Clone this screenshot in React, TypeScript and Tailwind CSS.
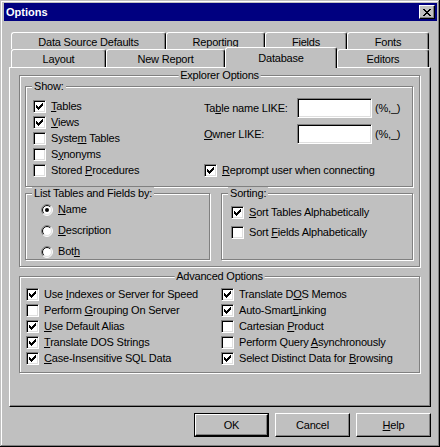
import React from 'react'

// 7x7 win95 check mark and 8x7 close glyph, drawn pixel by pixel
const CHECK = ['......X', '.....XX', 'X...XXX', 'XX.XXX.', 'XXXXX..', '.XXX...', '..X....']
const CLOSE = ['XX....XX', '.XX..XX.', '..XXXX..', '...XX...', '..XXXX..', '.XX..XX.', 'XX....XX']

const Pixels = ({ rows }: { rows: string[] }) => (
  <svg
    width={rows[0].length}
    height={rows.length}
    viewBox={`0 0 ${rows[0].length} ${rows.length}`}
    shapeRendering="crispEdges">
    {rows.flatMap((row, y) =>
      row
        .split('')
        .map((c, x) =>
          c === 'X' ? <rect key={`${x}-${y}`} x={x} y={y} width="1" height="1" fill="#000" /> : null,
        ),
    )}
  </svg>
)

const sunken =
  'bg-white border border-t-[#808080] border-l-[#808080] border-b-white border-r-white shadow-[inset_1px_1px_0_#000,inset_-1px_-1px_0_#dfdfdf]'

const CheckBox = ({ checked }: { checked?: boolean }) => (
  <div className={`w-[13px] h-[13px] shrink-0 flex items-center justify-center ${sunken}`}>
    {checked && <Pixels rows={CHECK} />}
  </div>
)

const Check = ({ checked, children }: { checked?: boolean; children: React.ReactNode }) => (
  <div className="flex items-center h-[16px]">
    <CheckBox checked={checked} />
    <span className="ml-[5px] whitespace-nowrap leading-[13px]">{children}</span>
  </div>
)

const Radio = ({ checked, children }: { checked?: boolean; children: React.ReactNode }) => {
  const arc = (r: number) => {
    const d = r * 0.7071
    return { bl: `${6 - d} ${6 + d}`, tr: `${6 + d} ${6 - d}` }
  }
  const o = arc(5.5)
  const i = arc(4.5)
  return (
    <div className="flex items-center h-[21px]">
      <svg width="12" height="12" viewBox="0 0 12 12" className="shrink-0">
        <circle cx="6" cy="6" r="5" fill="#fff" />
        <path d={`M${o.bl} A5.5 5.5 0 0 1 ${o.tr}`} stroke="#808080" fill="none" />
        <path d={`M${o.tr} A5.5 5.5 0 0 1 ${o.bl}`} stroke="#fff" fill="none" />
        <path d={`M${i.bl} A4.5 4.5 0 0 1 ${i.tr}`} stroke="#000" fill="none" />
        <path d={`M${i.tr} A4.5 4.5 0 0 1 ${i.bl}`} stroke="#dfdfdf" fill="none" />
        {checked && <circle cx="6" cy="6" r="2" fill="#000" />}
      </svg>
      <span className="ml-[5px] whitespace-nowrap leading-[13px]">{children}</span>
    </div>
  )
}

const GroupBox = ({
  label,
  center,
  className,
  children,
}: {
  label: string
  center?: boolean
  className: string
  children?: React.ReactNode
}) => (
  <div className={`relative shrink-0 border border-[#808080] shadow-[1px_1px_0_#fff,inset_1px_1px_0_#fff] ${className}`}>
    <span
      className={`absolute top-[-7px] leading-[13px] px-[2px] bg-[#c0c0c0] whitespace-nowrap ${
        center ? 'left-1/2 -translate-x-1/2' : 'left-[6px]'
      }`}>
      {label}
    </span>
    {children}
  </div>
)

const Tab = ({ label, className }: { label: string; className: string }) => (
  <div
    className={`shrink-0 flex items-center justify-center pt-[2px] bg-[#c0c0c0] border-l border-t border-white border-r border-r-black rounded-t-[3px] shadow-[inset_-1px_0_0_#808080] whitespace-nowrap ${className}`}>
    {label}
  </div>
)

const raised =
  'bg-[#c0c0c0] border border-t-white border-l-white border-b-black border-r-black shadow-[inset_-1px_-1px_0_#808080]'

const Button = ({ children, isDefault }: { children: React.ReactNode; isDefault?: boolean }) =>
  isDefault ? (
    <div className="w-[75px] h-[24px] border border-black flex">
      <div className={`flex-1 flex items-center justify-center ${raised}`}>{children}</div>
    </div>
  ) : (
    <div className={`w-[75px] h-[24px] flex items-center justify-center ${raised}`}>{children}</div>
  )

export default function App() {
  return (
    <div className="w-[440px] h-[447px] bg-[#c0c0c0] pt-[3px] text-black text-[11px] tracking-[-0.2px] font-['Liberation_Sans',Arial,sans-serif] shadow-[inset_-1px_-1px_0_#000,inset_1px_1px_0_#c0c0c0,inset_-2px_-2px_0_#808080,inset_2px_2px_0_#fff] overflow-hidden">
      {/* title bar */}
      <div className="ml-[4px] w-[433px] h-[18px] bg-[#000080] flex items-center justify-between pl-[2px] pr-[2px]">
        <span className="text-white font-bold tracking-normal leading-[13px]">Options</span>
        <div className={`w-[16px] h-[14px] flex items-center justify-center ${raised}`}>
          <Pixels rows={CLOSE} />
        </div>
      </div>

      {/* tabs */}
      <div className="mt-[11px] ml-[11px] flex h-[17px]">
        <Tab label="Data Source Defaults" className="w-[155px] h-[17px]" />
        <Tab label="Reporting" className="w-[99px] h-[17px]" />
        <Tab label="Fields" className="w-[82px] h-[17px]" />
        <Tab label="Fonts" className="w-[82px] h-[17px]" />
      </div>
      <div className="ml-[11px] flex items-start h-[18px] relative z-10">
        <Tab label="Layout" className="w-[95px] h-[18px]" />
        <Tab label="New Report" className="w-[119px] h-[18px]" />
        <Tab label="Database" className="w-[112px] h-[21px] -mt-[2px] pb-[2px]" />
        <Tab label="Editors" className="w-[92px] h-[18px]" />
      </div>

      {/* tab panel */}
      <div className="ml-[9px] w-[422px] h-[340px] pt-[7px] pl-[9px] border border-t-white border-l-white border-b-black border-r-black shadow-[inset_-1px_-1px_0_#808080]">
        <GroupBox label="Explorer Options" center className="w-[401px] h-[192px] pt-[10px] pl-[5px]">
          <GroupBox label="Show:" className="w-[388px] h-[101px] pt-[11px] pl-[7px] flex">
            <div className="w-[171px] flex flex-col">
              <Check checked>
                <u>T</u>ables
              </Check>
              <Check checked>
                <u>V</u>iews
              </Check>
              <Check>
                Syste<u>m</u> Tables
              </Check>
              <Check>
                S<u>y</u>nonyms
              </Check>
              <Check>
                Stored <u>P</u>rocedures
              </Check>
            </div>
            <div className="flex flex-col">
              <div className="flex items-center h-[20px]">
                <span className="w-[93px] leading-[13px]">
                  Ta<u>b</u>le name LIKE:
                </span>
                <div className={`w-[75px] h-[20px] ${sunken}`} />
                <span className="ml-[3px] leading-[13px]">(%,_)</span>
              </div>
              <div className="flex items-center h-[20px] mt-[6px]">
                <span className="w-[93px] leading-[13px]">
                  <u>O</u>wner LIKE:
                </span>
                <div className={`w-[75px] h-[20px] ${sunken}`} />
                <span className="ml-[3px] leading-[13px]">(%,_)</span>
              </div>
              <div className="mt-[18px]">
                <Check checked>
                  <u>R</u>eprompt user when connecting
                </Check>
              </div>
            </div>
          </GroupBox>

          <div className="mt-[6px] flex">
            <GroupBox label="List Tables and Fields by:" className="w-[185px] h-[67px] pt-[5px] pl-[15px]">
              <Radio checked>
                <u>N</u>ame
              </Radio>
              <Radio>
                <u>D</u>escription
              </Radio>
              <Radio>
                Bot<u>h</u>
              </Radio>
            </GroupBox>
            <GroupBox label="Sorting:" className="ml-[11px] w-[192px] h-[67px] pt-[10px] pl-[9px] flex flex-col gap-[4px]">
              <Check checked>
                <u>S</u>ort Tables Alphabetically
              </Check>
              <Check>
                Sort <u>F</u>ields Alphabetically
              </Check>
            </GroupBox>
          </div>
        </GroupBox>

        <GroupBox label="Advanced Options" center className="mt-[9px] w-[401px] h-[97px] pt-[9px] pl-[6px] flex">
          <div className="w-[195px] flex flex-col">
            <Check checked>
              Use <u>I</u>ndexes or Server for Speed
            </Check>
            <Check>
              Perform <u>G</u>rouping On Server
            </Check>
            <Check checked>
              <u>U</u>se Default Alias
            </Check>
            <Check checked>
              <u>T</u>ranslate DOS Strings
            </Check>
            <Check checked>
              <u>C</u>ase-Insensitive SQL Data
            </Check>
          </div>
          <div className="flex flex-col">
            <Check checked>
              Translate D<u>O</u>S Memos
            </Check>
            <Check checked>
              Auto-Smart<u>L</u>inking
            </Check>
            <Check>
              Cartesian <u>P</u>roduct
            </Check>
            <Check>
              Perform Query <u>A</u>synchronously
            </Check>
            <Check checked>
              Select Distinct Data for <u>B</u>rowsing
            </Check>
          </div>
        </GroupBox>
      </div>

      {/* buttons */}
      <div className="mt-[6px] ml-[194px] flex gap-[6px]">
        <Button isDefault>OK</Button>
        <Button>Cancel</Button>
        <Button>
          <u>H</u>elp
        </Button>
      </div>
    </div>
  )
}
